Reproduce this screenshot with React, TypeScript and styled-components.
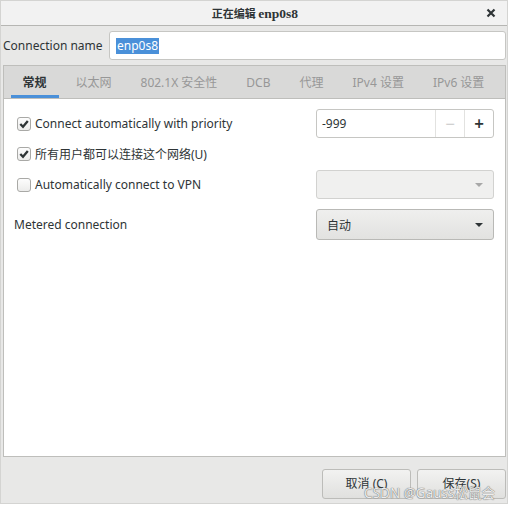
import React from 'react';
import styled, { createGlobalStyle } from 'styled-components';

const tabs = ['常规', '以太网', '802.1X 安全性', 'DCB', '代理', 'IPv4 设置', 'IPv6 设置'];

const GlobalStyle = createGlobalStyle`
  html, body {
    margin: 0;
    padding: 0;
    background: #fff;
  }
  body {
    font-family: 'Noto Sans', 'Noto Sans CJK SC', sans-serif;
    font-size: 12px;
    color: #2e3436;
  }
`;

const CheckIcon = () => (
  <svg width="10" height="10" viewBox="0 0 10 10">
    <path d="M1.3 5 L4 7.8 L8.8 2" fill="none" stroke="#2e3436" strokeWidth="2.3" />
  </svg>
);

const Arrow: React.FC<{ $muted?: boolean }> = ({ $muted }) => (
  <svg width="10" height="6" viewBox="0 0 10 6">
    <path d="M1 1 L9 1 L5 5 Z" fill={$muted ? '#a8a8a8' : '#2e3436'} />
  </svg>
);

const App: React.FC = () => {
  return (
    <>
      <GlobalStyle />
      <Window>
        <TitleBar>
          <Title>
            正在编辑 <TitleLatin>enp0s8</TitleLatin>
          </Title>
          <Close>
            <svg width="10" height="10" viewBox="0 0 10 10">
              <path d="M1.5 1.5 L8.5 8.5 M8.5 1.5 L1.5 8.5" stroke="#2e3436" strokeWidth="2.2" />
            </svg>
          </Close>
        </TitleBar>
        <Body>
          <NameRow>
            <NameLabel>Connection name</NameLabel>
            <Entry>
              <Selected>enp0s8</Selected>
            </Entry>
          </NameRow>
          <Notebook>
            <TabBar>
              {tabs.map((t, i) => (
                <Tab key={t} $active={i === 0}>
                  {t}
                </Tab>
              ))}
            </TabBar>
            <Page>
              <Row $h={29}>
                <CheckRow>
                  <Check $checked>
                    <CheckIcon />
                  </Check>
                  Connect automatically with priority
                </CheckRow>
                <Spin>
                  <SpinValue>-999</SpinValue>
                  <SpinButton $disabled>−</SpinButton>
                  <SpinButton>+</SpinButton>
                </Spin>
              </Row>
              <Row $h={20} $mt={6}>
                <CheckRow>
                  <Check $checked>
                    <CheckIcon />
                  </Check>
                  所有用户都可以连接这个网络(U)
                </CheckRow>
              </Row>
              <Row $h={29} $mt={6}>
                <CheckRow>
                  <Check />
                  Automatically connect to VPN
                </CheckRow>
                <Combo $disabled>
                  <span />
                  <Arrow $muted />
                </Combo>
              </Row>
              <Row $h={31} $mt={10}>
                <PlainLabel>Metered connection</PlainLabel>
                <Combo>
                  <span>自动</span>
                  <Arrow />
                </Combo>
              </Row>
            </Page>
          </Notebook>
          <ButtonBar>
            <Button>取消 (C)</Button>
            <Button>保存(S)</Button>
            <Watermark>CSDN @Gauss松鼠会</Watermark>
          </ButtonBar>
        </Body>
      </Window>
    </>
  );
};

const Window = styled.div`
  position: relative;
  display: flex;
  flex-direction: column;
  width: 508px;
  height: 504px;
  box-sizing: border-box;
  border: 1px solid #d4d4d2;
  background: #e8e8e7;
`;

const TitleBar = styled.div`
  position: relative;
  display: flex;
  align-items: center;
  justify-content: center;
  height: 24px;
  background: #f2f2f2;
  border-bottom: 1px solid #b6b6b3;
`;

const Title = styled.div`
  font-family: 'Noto Sans CJK SC', sans-serif;
  font-weight: 700;
  font-size: 11px;
  color: #2e3436;
  margin-left: 2px;
`;

const TitleLatin = styled.span`
  font-family: 'Liberation Serif', 'DejaVu Serif', serif;
  font-size: 13.5px;
`;

const Close = styled.div`
  position: absolute;
  right: 11px;
  top: 7px;
  display: flex;
`;

const Body = styled.div`
  display: flex;
  flex-direction: column;
  flex: 1;
  padding: 0 1px 0 2px;
`;

const NameRow = styled.div`
  display: flex;
  align-items: center;
  height: 29px;
  margin-top: 5px;
`;

const NameLabel = styled.div`
  width: 106px;
  white-space: nowrap;
  color: #2e3436;
`;

const Entry = styled.div`
  flex: 1;
  display: flex;
  align-items: center;
  height: 29px;
  box-sizing: border-box;
  padding-left: 6px;
  background: #fff;
  border: 1px solid #c6c6c3;
  border-radius: 3px;
`;

const Selected = styled.span`
  background: #4a90d9;
  color: #fff;
  line-height: 16px;
  padding: 0 1px;
`;

const Notebook = styled.div`
  display: flex;
  flex-direction: column;
  flex: 1;
  margin-top: 5px;
  border: 1px solid #bebebb;
`;

const TabBar = styled.div`
  display: flex;
  align-items: stretch;
  height: 32px;
  padding-left: 4px;
  background: #d9d9d8;
  border-bottom: 1px solid #bebebb;
`;

const Tab = styled.div<{ $active?: boolean }>`
  display: flex;
  align-items: center;
  margin: 0 2.5px;
  padding: 0 12px;
  color: ${(p) => (p.$active ? '#2e3436' : '#979797')};
  font-weight: ${(p) => (p.$active ? 700 : 400)};
  box-shadow: ${(p) => (p.$active ? 'inset 0 -3px 0 #4a90d9' : 'none')};
  white-space: nowrap;
`;

const Page = styled.div`
  flex: 1;
  display: flex;
  flex-direction: column;
  padding: 10px 11px 0 10px;
  background: #fff;
`;

const Row = styled.div<{ $h: number; $mt?: number }>`
  display: flex;
  align-items: center;
  justify-content: space-between;
  height: ${(p) => p.$h}px;
  margin-top: ${(p) => p.$mt || 0}px;
`;

const CheckRow = styled.div`
  display: flex;
  align-items: center;
  gap: 4px;
  margin-left: 3px;
`;

const Check = styled.div<{ $checked?: boolean }>`
  display: flex;
  align-items: center;
  justify-content: center;
  width: 14px;
  height: 14px;
  box-sizing: border-box;
  border: 1px solid #a9a9a6;
  border-radius: 3px;
  background: linear-gradient(#fdfdfd, #ececeb);
`;

const PlainLabel = styled.div``;

const Spin = styled.div`
  display: flex;
  width: 178px;
  height: 29px;
  box-sizing: border-box;
  border: 1px solid #c6c6c3;
  border-radius: 3px;
  background: #fff;
`;

const SpinValue = styled.div`
  flex: 1;
  display: flex;
  align-items: center;
  padding-left: 5px;
`;

const SpinButton = styled.div<{ $disabled?: boolean }>`
  display: flex;
  align-items: center;
  justify-content: center;
  width: 28px;
  border-left: 1px solid #e2e2e0;
  font-size: 17px;
  font-weight: ${(p) => (p.$disabled ? 400 : 600)};
  color: ${(p) => (p.$disabled ? '#c8c8c8' : '#2e3436')};
`;

const Combo = styled.div<{ $disabled?: boolean }>`
  display: flex;
  align-items: center;
  justify-content: space-between;
  width: 178px;
  height: 100%;
  box-sizing: border-box;
  padding: 0 9px 0 10px;
  border: 1px solid ${(p) => (p.$disabled ? '#d2d2d0' : '#b9b9b6')};
  border-radius: 3px;
  background: ${(p) => (p.$disabled ? '#f0f0ef' : 'linear-gradient(#efefee, #e2e2e0)')};
`;

const ButtonBar = styled.div`
  position: relative;
  display: flex;
  justify-content: flex-end;
  gap: 6px;
  height: 46px;
  padding-top: 12px;
  box-sizing: border-box;
`;

const Button = styled.div`
  display: flex;
  align-items: center;
  justify-content: center;
  width: 89px;
  height: 30px;
  box-sizing: border-box;
  padding-bottom: 3px;
  border: 1px solid #bcbcb9;
  border-radius: 3px;
  background: linear-gradient(#f2f2f1, #e0e0de);
  color: #2e3436;
`;

const Watermark = styled.div`
  position: absolute;
  right: 11px;
  top: 25px;
  font-size: 13.5px;
  color: #ececec;
  text-shadow: 0 0 1px #6f6f6f, 0 0 1px #6f6f6f;
  white-space: nowrap;
`;

export default App;
